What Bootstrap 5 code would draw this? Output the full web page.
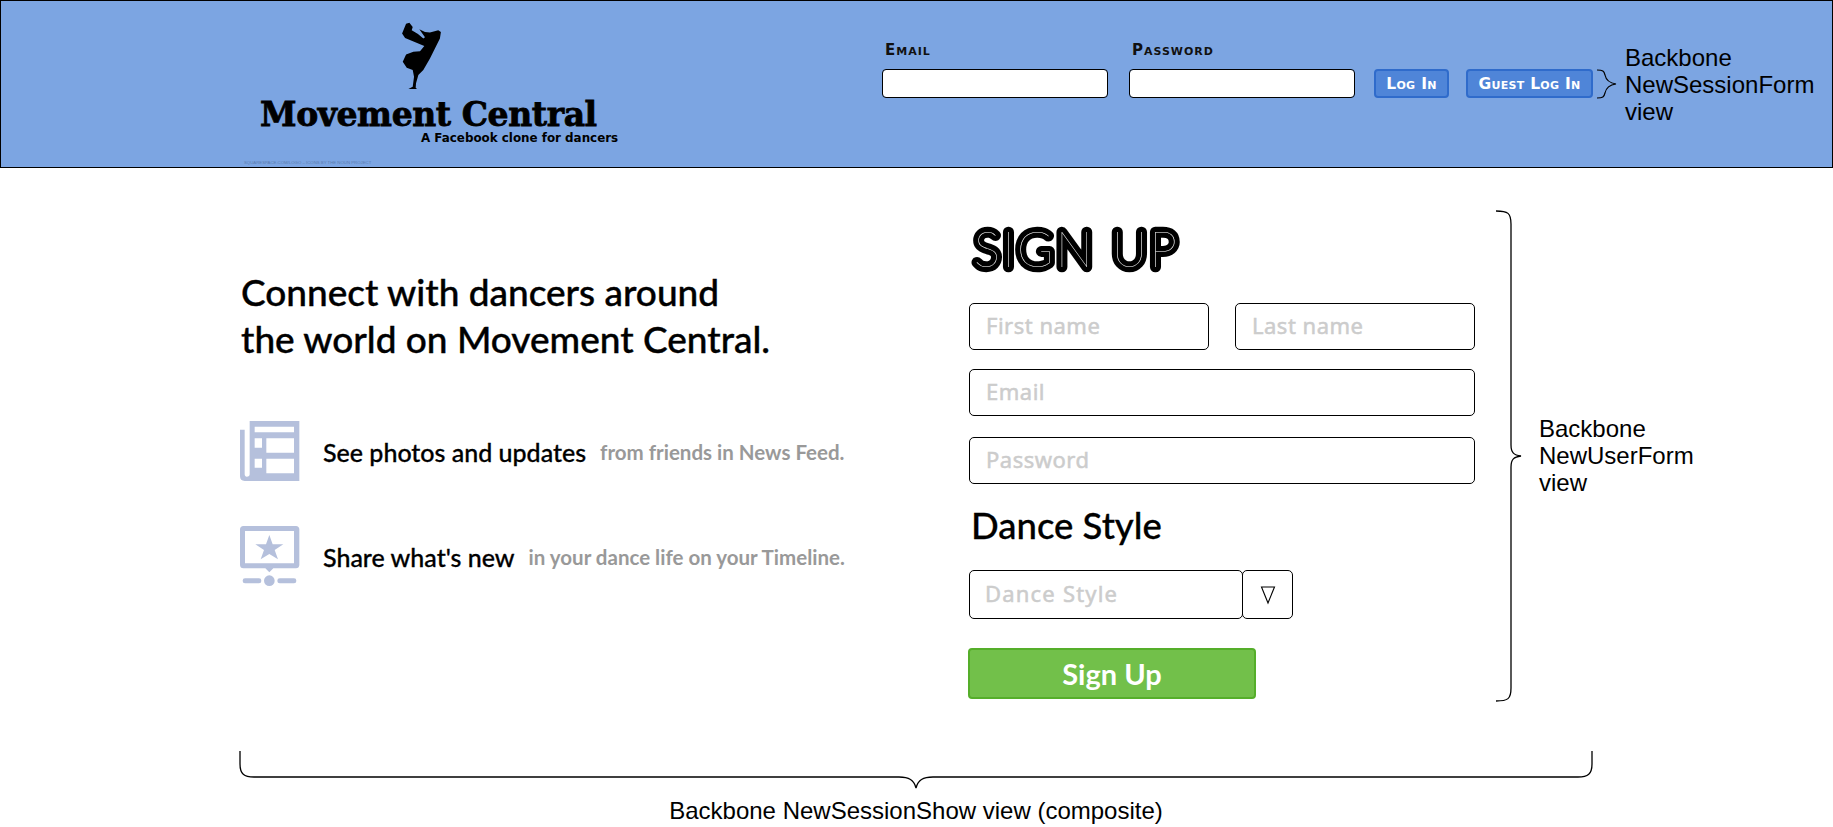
<!DOCTYPE html>
<html lang="en"><head><meta charset="utf-8"><title>Movement Central</title>
<link href="https://cdn.jsdelivr.net/npm/bootstrap@5.3.0/dist/css/bootstrap.min.css" rel="stylesheet">
<style>
html,body{height:827px;overflow:hidden;background:#fff}
body{font-family:"Lato",sans-serif;color:#000}
.top-bar{height:168px;background:#7ca5e2;border:1px solid #000;padding-left:239px}
.logo-col{width:642px;height:166px}
.fig{display:block;margin-left:160px;margin-top:21px;width:42px;height:68px}
.logo-name{font-family:"DejaVu Serif",serif;font-weight:700;font-size:33px;line-height:32px;letter-spacing:-.4px;margin:9px 0 0 20px;white-space:nowrap;-webkit-text-stroke:.8px #000}
.logo-tag{font-family:"DejaVu Sans",sans-serif;font-weight:700;font-size:11.9px;line-height:14px;margin:0 0 0 181px;white-space:nowrap}
.logo-credit{font-family:"Liberation Sans",sans-serif;font-size:4.3px;line-height:6px;color:#5a7cb0;margin:15px 0 0 4px;white-space:nowrap}
.login-col{width:226px;margin-right:21px}
.login-lbl{font-family:"DejaVu Sans",sans-serif;font-weight:700;font-variant:small-caps;font-size:15px;letter-spacing:1px;line-height:16px;margin:-1px 0 11px 3px;color:#111}
.login-input.form-control{height:29px;border:1px solid #000;border-radius:4px;padding:0;min-height:0}
.login-wrap{padding-top:42px}
.btn-blue.btn{height:29px;background:#4f85d8;border:2px solid #2f6bcb;border-radius:4px;color:#fff;font-family:"DejaVu Sans",sans-serif;font-weight:700;font-variant:small-caps;font-size:15.5px;letter-spacing:.3px;padding:0;line-height:24px}
.btn-login.btn{width:75px;margin:26px 17px 0 -2px}
.btn-guest.btn{width:127px;margin-top:26px;margin-right:4px}
.brace-h{margin-top:26px}
.note{font-family:"Liberation Sans",sans-serif;font-size:24px;line-height:27px}
.note-top{margin:43px 0 0 8px}
.main-area{padding-left:240px}
.intro{width:729px;padding-top:100px}
.intro-h{font-family:"Lato",sans-serif;font-weight:500;font-size:37px;line-height:47px;margin:0 0 58px 1px;-webkit-text-stroke:.4px #000}
.feat{height:61px;margin-bottom:44px}
.feat svg{width:60px;height:60px;flex:none;margin-right:23px}
.feat-a{font-size:25px;font-weight:500;white-space:nowrap;margin-right:14px;padding-top:4px;-webkit-text-stroke:.3px #000}
.feat-b{font-size:20.5px;font-weight:700;color:#999;white-space:nowrap;padding-top:4px}
.signup{width:506px;padding-top:58px}
.signup-h{height:46px;margin:0 0 31px 0;line-height:0}
.signup-h svg{overflow:visible;display:block}
.signup-h text{font-family:"Lato",sans-serif;font-weight:100;font-size:49px;letter-spacing:2.6px;fill:#fff;stroke:#000;stroke-width:10.5px;stroke-linejoin:round;paint-order:stroke fill}
.su-input.form-control,.su-select{height:47px;border:1px solid #000;border-radius:5px;padding:0 16px 3px;font-family:"Noto Sans",sans-serif;font-size:22px;letter-spacing:.5px}
.su-input.form-control::placeholder{color:#ccc;-webkit-text-stroke:.5px #ccc}
.su-gap{gap:26px}
.su-row1{margin-bottom:19px}
.su-row2{margin-bottom:21px}
.su-row3{margin-bottom:20px}
.dance-h{font-family:"Lato",sans-serif;font-weight:500;font-size:36.5px;line-height:44px;margin:-1px 0 23px 2px;-webkit-text-stroke:.3px #000}
.su-select{width:274px;height:49px;display:flex;align-items:center;color:#ccc;padding-left:15px;background:#fff;letter-spacing:1.2px;-webkit-text-stroke:.5px #ccc}
.su-caret.btn{width:51px;height:49px;margin-left:-1px;border:1px solid #000;border-radius:5px;background:#fff;padding:0;display:flex;align-items:center;justify-content:center}
.su-btn.btn{display:block;width:288px;height:51px;margin:29px 0 0 -1px;background:#72c04a;border:2px solid #55ae2a;border-radius:4px;color:#fff;font-weight:700;font-size:29px;line-height:44px;padding:0}
.brace-r{width:26px;height:492px;margin:42px 0 0 21px;flex:none}
.note-r{margin:247px 0 0 17px}
.foot-area{margin-top:50px}
.brace-b{display:block;width:1354px;height:38px;margin:-1px 0 0 -1px}
.note-b{text-align:center;width:1352px;line-height:26px;margin-top:9px}
</style></head><body>
<header class="top-bar d-flex">
 <div class="logo-col">
  <svg class="fig" viewBox="30 20 126 205"><path fill="#000" d="M36 55 48 25 58 22 68 35 65 45Q85 55 100 70L105 66 88 42 105 50 120 52 145 45 153 50 150 70 135 100 120 130 100 165 85 180 78 205 77 218 81 222 55 222 68 215 72 185 68 165 50 158 38 140 48 118 70 110 90 108 103 92 45 68Z"/></svg>
  <div class="logo-name">Movement Central</div>
  <div class="logo-tag">A Facebook clone for dancers</div>
  <div class="logo-credit">SQUARESPACE.COM/LOGO – ICONS BY THE NOUN PROJECT</div>
 </div>
 <div class="login-wrap login-col"><div class="login-lbl">Email</div><input class="form-control login-input" type="text" aria-label="Email"></div>
 <div class="login-wrap login-col"><div class="login-lbl">Password</div><input class="form-control login-input" type="password" aria-label="Password"></div>
 <div class="login-wrap d-flex">
  <button class="btn btn-blue btn-login" type="button">Log In</button>
  <button class="btn btn-blue btn-guest" type="button">Guest Log In</button>
  <svg class="brace-h" width="20" height="30" viewBox="0 0 20 30" fill="none" stroke="#000" stroke-width="1.2"><path d="M0 1C6 1 7 2 8 6 9 11 12 14 19 15 12 16 9 19 8 24 7 28 6 29 0 29"/></svg>
 </div>
 <div class="note note-top">Backbone<br>NewSessionForm<br>view</div>
</header>
<main class="main-area d-flex">
 <section class="intro">
  <h1 class="intro-h">Connect with dancers around<br>the world on Movement Central.</h1>
  <div class="feat d-flex align-items-center">
   <svg viewBox="0 0 180 180"><path fill="#b5c0dc" d="M29 0H178V180H14C5 180 0 175 0 166V26H14V160C14 165 17 167 20 167 26 167 29 164 29 160Z"/><path fill="#fff" d="M44 17H162V34H44ZM44 52H66V80H44ZM79 52H162V95H79ZM44 113H66V140H44ZM79 113H162V157H79Z"/></svg>
   <span class="feat-a">See photos and updates</span><span class="feat-b">from friends in News Feed.</span>
  </div>
  <div class="feat d-flex align-items-center">
   <svg viewBox="0 0 180 180"><path fill="#b5c0dc" fill-rule="evenodd" d="M10 0H168C174 0 178 4 178 10V117C178 123 174 127 168 127H100L88 139 76 127H10C4 127 0 123 0 117V10C0 4 4 0 10 0ZM15 15V112H162V15Z"/><path fill="#b5c0dc" d="M88 27 98 55H130L104 72 114 100 88 84 62 100 72 72 46 55H78Z"/><circle cx="88" cy="164" r="16" fill="#b5c0dc"/><rect x="8" y="157" width="56" height="15" rx="7" fill="#b5c0dc"/><rect x="112" y="157" width="57" height="15" rx="7" fill="#b5c0dc"/></svg>
   <span class="feat-a">Share what's new</span><span class="feat-b">in your dance life on your Timeline.</span>
  </div>
 </section>
 <section class="signup">
  <h2 class="signup-h"><svg width="230" height="46"><text x="5" y="41">SIGN UP</text></svg></h2>
  <div class="d-flex su-gap su-row1"><input class="form-control su-input" placeholder="First name" aria-label="First name"><input class="form-control su-input" placeholder="Last name" aria-label="Last name"></div>
  <div class="su-row2"><input class="form-control su-input" placeholder="Email" aria-label="Email address"></div>
  <div class="su-row3"><input class="form-control su-input" placeholder="Password" aria-label="New password"></div>
  <h3 class="dance-h">Dance Style</h3>
  <div class="d-flex"><div class="su-select">Dance Style</div><button class="btn su-caret" type="button" aria-label="Open"><svg width="16" height="20" viewBox="0 0 16 20" fill="none" stroke="#000" stroke-width="1.1"><path d="M1.5 2H14.5L8 18Z"/></svg></button></div>
  <button class="btn su-btn" type="button">Sign Up</button>
 </section>
 <svg class="brace-r" viewBox="0 0 26 492" fill="none" stroke="#000" stroke-width="1.3"><path d="M0 1C12 1 15 3 15 14V235C15 243 18 245 25 246 18 247 15 249 15 257V478C15 489 12 491 0 491"/></svg>
 <div class="note note-r">Backbone<br>NewUserForm<br>view</div>
</main>
<footer class="main-area foot-area">
 <svg class="brace-b" viewBox="0 0 1354 38" fill="none" stroke="#000" stroke-width="1.3"><path d="M1 0V13C1 23 5 26 15 26H660C670 26 675 29 677 37 679 29 684 26 694 26H1339C1349 26 1353 23 1353 13V0"/></svg>
 <div class="note note-b">Backbone NewSessionShow view (composite)</div>
</footer>
</body></html>
